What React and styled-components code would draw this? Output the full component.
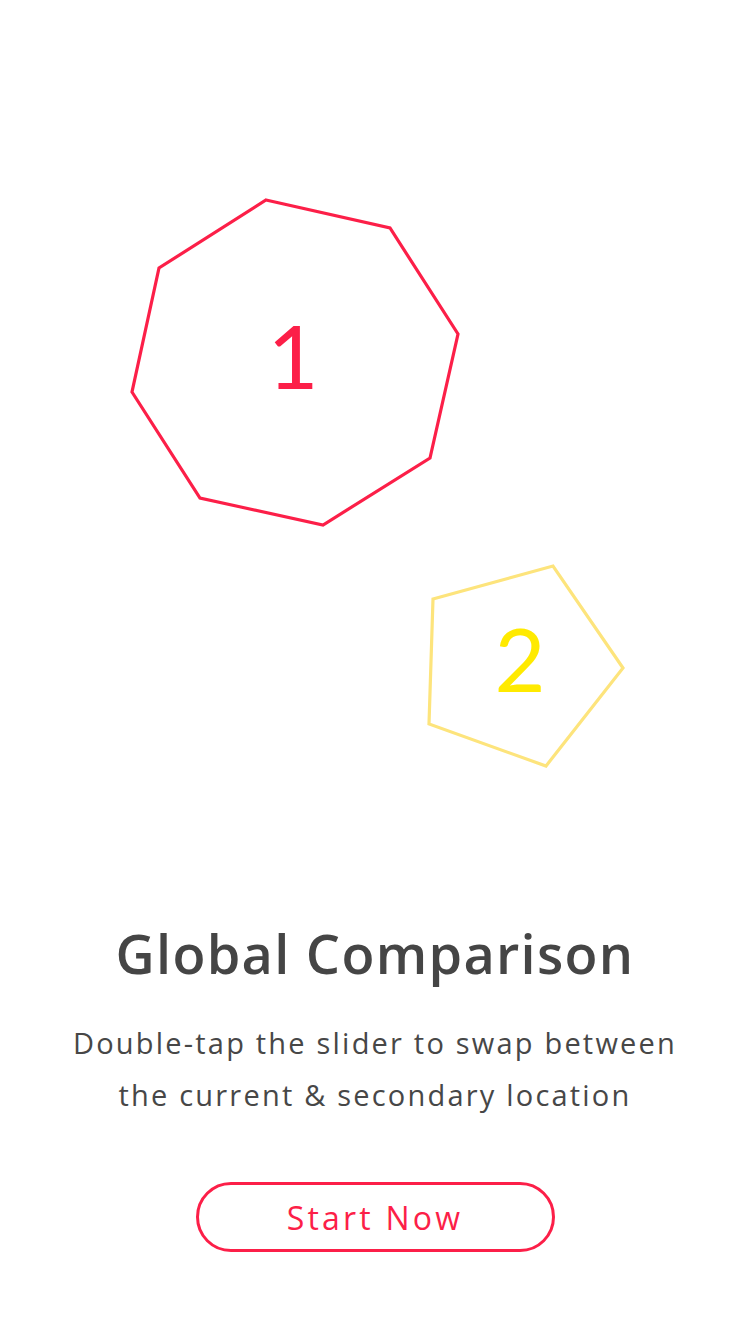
import React from "react";
import styled, { createGlobalStyle } from "styled-components";

const GlobalStyle = createGlobalStyle`
  html, body {
    margin: 0;
    padding: 0;
    background: #ffffff;
  }
  body {
    font-family: "Open Sans", "Noto Sans", sans-serif;
  }
`;

const Page = styled.main`
  width: 750px;
  height: 1334px;
  display: flex;
  flex-direction: column;
  align-items: center;
  background: #ffffff;
  overflow: hidden;
`;

const Stage = styled.svg`
  display: block;
  width: 750px;
  height: 921px;
  flex-shrink: 0;
`;

const Title = styled.h1`
  margin: 0;
  font-size: 54px;
  line-height: 64px;
  font-weight: 600;
  color: #454545;
  letter-spacing: 1.3px;
`;

const Body = styled.p`
  margin: 32px 0 0;
  font-size: 29px;
  line-height: 52px;
  font-weight: 400;
  color: #474747;
  text-align: center;
  letter-spacing: 2.2px;
`;

const StartButton = styled.button`
  margin-top: 61px;
  width: 359px;
  height: 70px;
  border: 3px solid #fc1f48;
  border-radius: 35px;
  background: transparent;
  color: #fc1f48;
  font-family: "Open Sans", "Noto Sans", sans-serif;
  font-size: 32px;
  letter-spacing: 3.2px;
  cursor: pointer;
`;

const octagon = "266,200 390,228 458,334 430,458 323,525 200,498 132,392 159,268";
const pentagon = "433,599 553,566 623,668 546,766 429,724";
const digitFont = "Lato, 'Noto Sans', sans-serif";

function App() {
  return (
    <Page>
      <GlobalStyle />
      <Stage viewBox="0 0 750 921">
        <polygon points={octagon} fill="none" stroke="#fc1f48" strokeWidth="3.2" />
        <text x="293" y="389" textAnchor="middle" fontFamily={digitFont} fontSize="88" fill="#fc1f48">1</text>
        <polygon points={pentagon} fill="none" stroke="#fde47c" strokeWidth="3.2" />
        <text x="520" y="692" textAnchor="middle" fontFamily={digitFont} fontSize="88" fill="#ffea00">2</text>
      </Stage>
      <Title>Global Comparison</Title>
      <Body>
        Double-tap the slider to swap between
        <br />
        the current &amp; secondary location
      </Body>
      <StartButton>Start Now</StartButton>
    </Page>
  );
}

export default App;
